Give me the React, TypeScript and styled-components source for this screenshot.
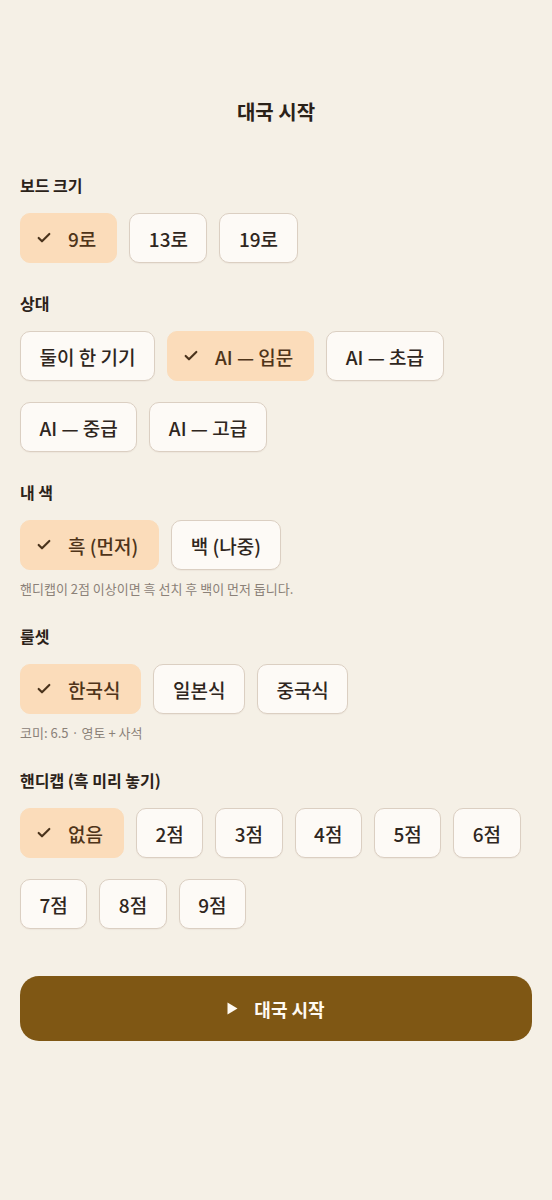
import React, { useState } from 'react'
import styled, { createGlobalStyle } from 'styled-components'

const GlobalStyle = createGlobalStyle`
  html, body {
    margin: 0;
    padding: 0;
    background: #f5f0e6;
  }
  body {
    font-family: 'Noto Sans CJK KR', 'Noto Sans', sans-serif;
    color: #2b2219;
  }
`

const Page = styled.div`
  min-height: 1200px;
  box-sizing: border-box;
  padding: 96px 20px 40px;
  background: #f5f0e6;
`

const Title = styled.h1`
  margin: 0 0 45px;
  font-size: 20px;
  line-height: 32px;
  font-weight: 700;
  text-align: center;
  color: #2b2219;
`

const Section = styled.section<{ $hint?: boolean }>`
  display: flex;
  flex-direction: column;
  margin-bottom: ${p => (p.$hint ? '25px' : '28px')};
`

const Label = styled.h2`
  margin: 0 0 16px;
  font-size: 16px;
  line-height: 24px;
  font-weight: 700;
  color: #2b2219;
`

const ChipRow = styled.div`
  display: flex;
  flex-wrap: wrap;
  column-gap: 12px;
  row-gap: 21px;
`

const Chip = styled.button<{ $active: boolean }>`
  display: flex;
  align-items: center;
  height: 50px;
  box-sizing: border-box;
  padding: ${p => (p.$active ? '0 20px 0 15px' : '0 18.5px')};
  border-radius: 10px;
  border: 1px solid ${p => (p.$active ? '#fbdcba' : '#dbcfc2')};
  background: ${p => (p.$active ? '#fbdcba' : '#fdfaf6')};
  color: ${p => (p.$active ? '#4f3419' : '#2f2620')};
  font-family: inherit;
  font-size: 19px;
  font-weight: 500;
  white-space: nowrap;
  cursor: pointer;
  box-shadow: ${p => (p.$active ? 'none' : '0 1px 1px rgba(120, 90, 60, 0.06)')};
`

const CheckBox = styled.span`
  display: inline-flex;
  width: 16px;
  height: 16px;
  margin-right: 16px;
`

const Hint = styled.p`
  margin: 9px 0 0;
  font-size: 13px;
  line-height: 20px;
  color: #8b8178;
`

const StartButton = styled.button`
  display: flex;
  align-items: center;
  justify-content: center;
  gap: 16px;
  width: 100%;
  height: 65px;
  margin-top: 47px;
  border: none;
  border-radius: 19px;
  background: #7f5714;
  color: #fffaf2;
  font-family: inherit;
  font-size: 18px;
  font-weight: 700;
  cursor: pointer;
`

const CheckIcon = () => (
  <svg width='16' height='16' viewBox='0 0 24 24' fill='none' stroke='#4a331c' strokeWidth='3.2' strokeLinecap='round' strokeLinejoin='round'>
    <polyline points='20 6 9 17 4 12' />
  </svg>
)

const PlayIcon = () => (
  <svg width='11' height='13' viewBox='0 0 11 13'>
    <polygon points='0.5,0.5 10.5,6.5 0.5,12.5' fill='#fffaf2' />
  </svg>
)

interface IOptionGroupProps {
  label: string
  options: string[]
  value: string
  onChange: (v: string) => void
  hint?: string
}

const OptionGroup: React.FC<IOptionGroupProps> = ({ label, options, value, onChange, hint }) => (
  <Section $hint={!!hint}>
    <Label>{label}</Label>
    <ChipRow>
      {options.map(opt => (
        <Chip key={opt} $active={opt === value} onClick={() => onChange(opt)}>
          {opt === value && (
            <CheckBox>
              <CheckIcon />
            </CheckBox>
          )}
          {opt}
        </Chip>
      ))}
    </ChipRow>
    {hint && <Hint>{hint}</Hint>}
  </Section>
)

const komiText: Record<string, string> = {
  한국식: '코미: 6.5 · 영토 + 사석',
  일본식: '코미: 6.5 · 영토 + 사석',
  중국식: '코미: 7.5 · 영역'
}

const App: React.FC = () => {
  const [size, setSize] = useState('9로')
  const [opponent, setOpponent] = useState('AI — 입문')
  const [color, setColor] = useState('흑 (먼저)')
  const [rules, setRules] = useState('한국식')
  const [handicap, setHandicap] = useState('없음')

  return (
    <Page>
      <GlobalStyle />
      <Title>대국 시작</Title>

      <OptionGroup label='보드 크기' options={['9로', '13로', '19로']} value={size} onChange={setSize} />

      <OptionGroup
        label='상대'
        options={['둘이 한 기기', 'AI — 입문', 'AI — 초급', 'AI — 중급', 'AI — 고급']}
        value={opponent}
        onChange={setOpponent}
      />

      <OptionGroup
        label='내 색'
        options={['흑 (먼저)', '백 (나중)']}
        value={color}
        onChange={setColor}
        hint='핸디캡이 2점 이상이면 흑 선치 후 백이 먼저 둡니다.'
      />

      <OptionGroup
        label='룰셋'
        options={['한국식', '일본식', '중국식']}
        value={rules}
        onChange={setRules}
        hint={komiText[rules]}
      />

      <OptionGroup
        label='핸디캡 (흑 미리 놓기)'
        options={['없음', '2점', '3점', '4점', '5점', '6점', '7점', '8점', '9점']}
        value={handicap}
        onChange={setHandicap}
      />

      <StartButton>
        <PlayIcon />
        대국 시작
      </StartButton>
    </Page>
  )
}

export default App
